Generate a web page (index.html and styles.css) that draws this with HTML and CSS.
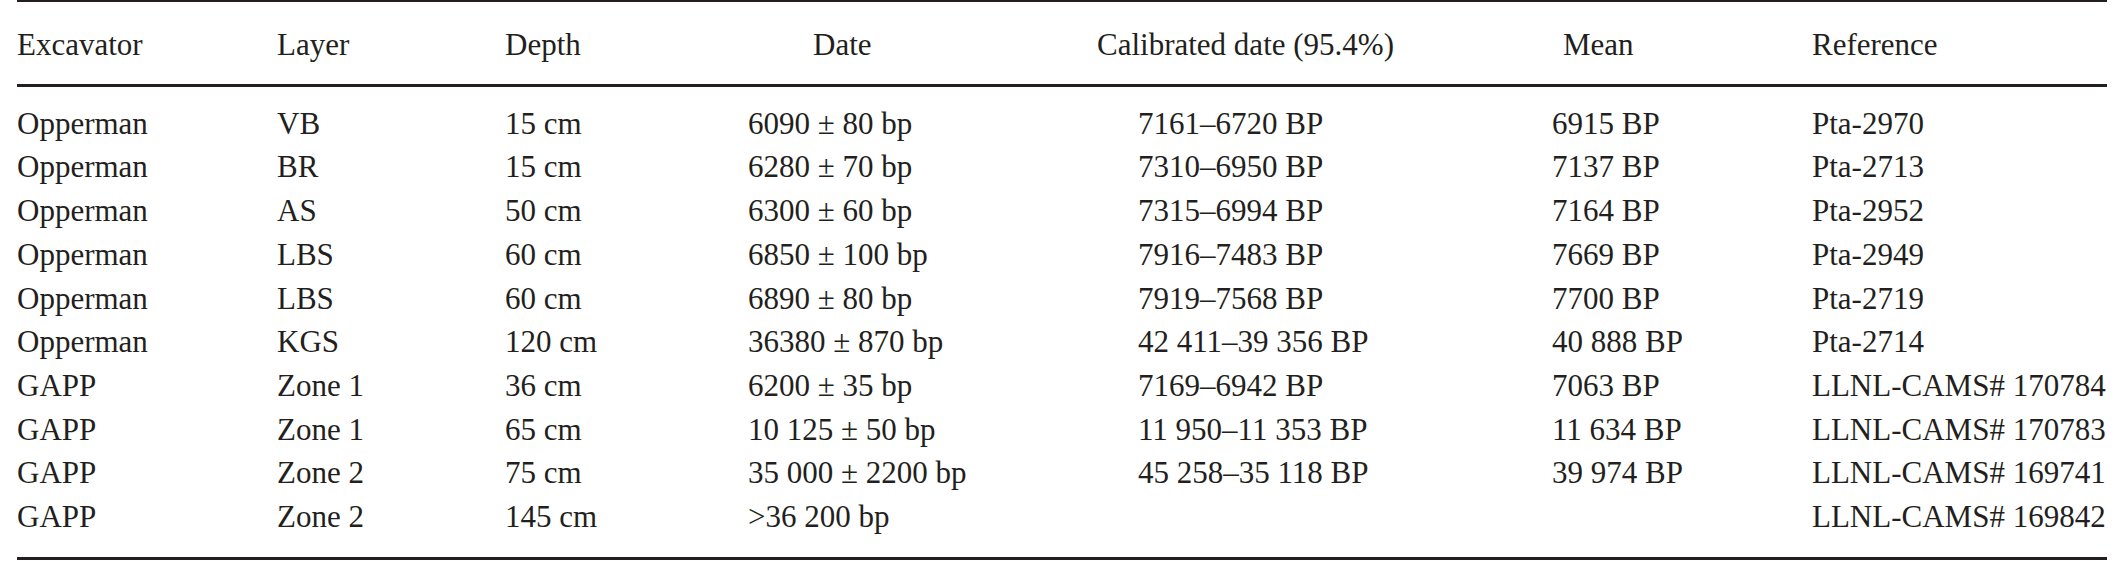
FILE: index.html
```html
<!DOCTYPE html>
<html lang="en">
<head>
<meta charset="utf-8">
<title>Radiocarbon dates</title>
<link rel="stylesheet" href="styles.css">
</head>
<body>
<table class="dates">
  <colgroup>
    <col class="c-exc"><col class="c-layer"><col class="c-depth"><col class="c-date"><col class="c-cal"><col class="c-mean"><col class="c-ref">
  </colgroup>
  <thead>
    <tr>
      <th>Excavator</th>
      <th>Layer</th>
      <th>Depth</th>
      <th class="h-date">Date</th>
      <th>Calibrated date (95.4%)</th>
      <th class="h-mean">Mean</th>
      <th>Reference</th>
    </tr>
  </thead>
  <tbody>
    <tr><td>Opperman</td><td>VB</td><td>15 cm</td><td>6090 ± 80 bp</td><td class="d-cal">7161–6720 BP</td><td>6915 BP</td><td>Pta-2970</td></tr>
    <tr><td>Opperman</td><td>BR</td><td>15 cm</td><td>6280 ± 70 bp</td><td class="d-cal">7310–6950 BP</td><td>7137 BP</td><td>Pta-2713</td></tr>
    <tr><td>Opperman</td><td>AS</td><td>50 cm</td><td>6300 ± 60 bp</td><td class="d-cal">7315–6994 BP</td><td>7164 BP</td><td>Pta-2952</td></tr>
    <tr><td>Opperman</td><td>LBS</td><td>60 cm</td><td>6850 ± 100 bp</td><td class="d-cal">7916–7483 BP</td><td>7669 BP</td><td>Pta-2949</td></tr>
    <tr><td>Opperman</td><td>LBS</td><td>60 cm</td><td>6890 ± 80 bp</td><td class="d-cal">7919–7568 BP</td><td>7700 BP</td><td>Pta-2719</td></tr>
    <tr><td>Opperman</td><td>KGS</td><td>120 cm</td><td>36380 ± 870 bp</td><td class="d-cal">42 411–39 356 BP</td><td>40 888 BP</td><td>Pta-2714</td></tr>
    <tr><td>GAPP</td><td>Zone 1</td><td>36 cm</td><td>6200 ± 35 bp</td><td class="d-cal">7169–6942 BP</td><td>7063 BP</td><td>LLNL-CAMS# 170784</td></tr>
    <tr><td>GAPP</td><td>Zone 1</td><td>65 cm</td><td>10 125 ± 50 bp</td><td class="d-cal">11 950–11 353 BP</td><td>11 634 BP</td><td>LLNL-CAMS# 170783</td></tr>
    <tr><td>GAPP</td><td>Zone 2</td><td>75 cm</td><td>35 000 ± 2200 bp</td><td class="d-cal">45 258–35 118 BP</td><td>39 974 BP</td><td>LLNL-CAMS# 169741</td></tr>
    <tr><td>GAPP</td><td>Zone 2</td><td>145 cm</td><td>&gt;36 200 bp</td><td class="d-cal"></td><td></td><td>LLNL-CAMS# 169842</td></tr>
  </tbody>
</table>
</body>
</html>
```
FILE: styles.css
```css
html, body {
  margin: 0;
  padding: 0;
  background: #ffffff;
}

body {
  padding-left: 17px;
  font-family: "Liberation Serif", "Times New Roman", serif;
  font-size: 31px;
  color: #231f20;
}

.dates {
  width: 2090px;
  table-layout: fixed;
  border-collapse: separate;
  border-spacing: 0;
}

.c-exc { width: 260px; }
.c-layer { width: 228px; }
.c-depth { width: 243px; }
.c-date { width: 349px; }
.c-cal { width: 455px; }
.c-mean { width: 260px; }
.c-ref { width: 295px; }

.dates th,
.dates td {
  padding: 0;
  text-align: left;
  font-weight: normal;
  white-space: nowrap;
  vertical-align: top;
}

.dates th {
  border-top: 2px solid #231f20;
  border-bottom: 3px solid #231f20;
  padding-top: 26px;
  padding-bottom: 22px;
  line-height: 34px;
}

.dates th.h-date { padding-left: 65px; }
.dates th.h-mean { padding-left: 11px; }

.dates td {
  line-height: 43.7px;
}

.dates td.d-cal { padding-left: 41px; }

.dates tbody tr:first-child td { padding-top: 14.7px; }

.dates tbody tr:last-child td {
  padding-bottom: 18.3px;
  border-bottom: 3px solid #231f20;
}
```
